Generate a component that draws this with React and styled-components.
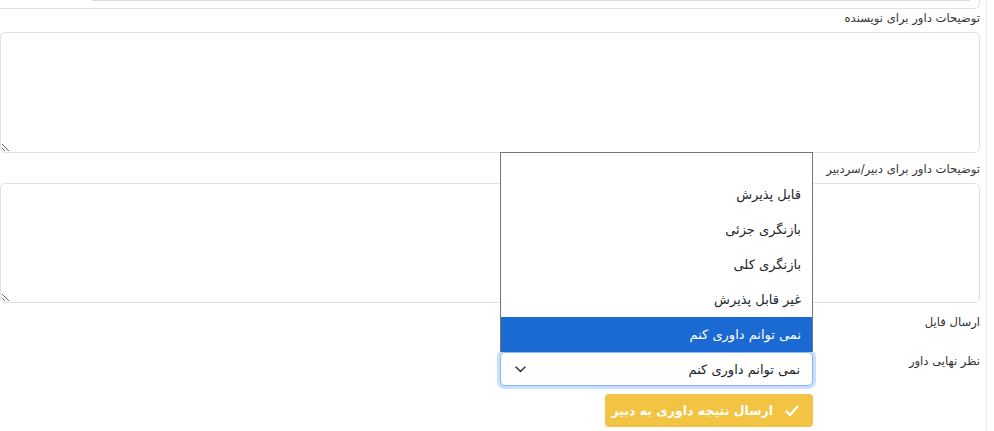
import React from "react"
import styled, { createGlobalStyle } from "styled-components"

const GlobalStyle = createGlobalStyle`
  html, body {
    margin: 0;
    padding: 0;
    background: #fff;
    overflow: hidden;
  }
  body {
    direction: rtl;
    font-family: "DejaVu Sans", "Noto Sans", sans-serif;
    color: #212529;
  }
`

const Frame = styled.div`
  height: 431px;
  margin-right: 7px;
  padding-right: 6px;
  border-right: 1px solid #e9ecef;
`

const TopBox = styled.div`
  height: 9px;
  border: 1px solid #dee2e6;
  border-top: none;
  border-left: none;
  border-radius: 0 0 5px 0;
  box-sizing: border-box;
`

const TopBar = styled.div`
  height: 1px;
  margin: 0 9px 0 92px;
  background: #d6dce4;
`

const Label = styled.label`
  display: block;
  font-size: 11.6px;
  line-height: 18px;
  color: #333;
  margin-top: ${p => p.$top || 0}px;
`

const TextArea = styled.textarea`
  display: block;
  width: 100%;
  height: ${p => p.$h}px;
  box-sizing: border-box;
  margin-top: 5px;
  border: 1px solid #dee2e6;
  border-radius: 5px;
  background: #fff;
  resize: vertical;
  font: inherit;
  outline: none;
`

const FormRow = styled.div`
  display: grid;
  grid-template-columns: 167px 313px;
  justify-content: start;
  height: ${p => p.$h}px;
`

const RowLabel = styled.div`
  font-size: 11.6px;
  line-height: 18px;
  color: #333;
  padding-top: ${p => p.$pad || 0}px;
`

const Control = styled.div`
  position: relative;
`

const Select = styled.div`
  height: 34px;
  box-sizing: border-box;
  border: 1px solid #86b7fe;
  border-radius: 5px;
  box-shadow: 0 0 0 3px rgba(13, 110, 253, 0.22);
  display: flex;
  align-items: center;
  justify-content: space-between;
  padding: 0 12px 0 14px;
  font-size: 13px;
  color: #212529;
  background: #fff;
`

const Chevron = styled.svg`
  width: 11px;
  height: 7px;
  display: block;
`

const OptionList = styled.div`
  position: absolute;
  left: 0;
  right: 0;
  bottom: 100%;
  box-sizing: border-box;
  height: 200px;
  border: 1px solid #767676;
  border-bottom: none;
  background: #fff;
  display: flex;
  flex-direction: column;
  z-index: 5;
`

const Option = styled.div`
  height: ${p => (p.$blank ? 24 : 35)}px;
  display: flex;
  align-items: center;
  padding-right: 11px;
  font-size: 13px;
  color: ${p => (p.$active ? "#fff" : "#212529")};
  background: ${p => (p.$active ? "#1b69d3" : "transparent")};
`

const SubmitButton = styled.button`
  margin-top: 8px;
  width: 208px;
  height: 33px;
  border: none;
  border-radius: 4px;
  background: #f3c443;
  color: #fff;
  font-family: inherit;
  font-size: 12.5px;
  font-weight: bold;
  display: flex;
  align-items: center;
  gap: 12px;
  padding: 0 14px 0 0;
  direction: rtl;
`

const Check = styled.svg`
  width: 14px;
  height: 12px;
  display: block;
`

const options = [
  "قابل پذیرش",
  "بازنگری جزئی",
  "بازنگری کلی",
  "غیر قابل پذیرش",
  "نمی توانم داوری کنم",
]

export default function App() {
  return (
    <>
      <GlobalStyle />
      <Frame>
        <TopBox>
          <TopBar />
        </TopBox>
        <Label>توضیحات داور برای نویسنده</Label>
        <TextArea $h={121} />
        <Label $top={7}>توضیحات داور برای دبیر/سردبیر</Label>
        <TextArea $h={120} />

        <FormRow $h={49}>
          <RowLabel $pad={10}>ارسال فایل</RowLabel>
          <div />
        </FormRow>

        <FormRow $h={34}>
          <RowLabel>نظر نهایی داور</RowLabel>
          <Control>
            <OptionList>
              <Option $blank />
              {options.map((o, i) => (
                <Option key={o} $active={i === options.length - 1}>
                  {o}
                </Option>
              ))}
            </OptionList>
            <Select>
              <span>نمی توانم داوری کنم</span>
              <Chevron viewBox="0 0 11 7">
                <polyline
                  points="1,1 5.5,5.5 10,1"
                  fill="none"
                  stroke="#343a40"
                  strokeWidth="1.5"
                  strokeLinecap="round"
                  strokeLinejoin="round"
                />
              </Chevron>
            </Select>
            <SubmitButton>
              <Check viewBox="0 0 14 12">
                <polyline
                  points="1.5,6.5 5,10 12.5,1.5"
                  fill="none"
                  stroke="#fff"
                  strokeWidth="2.2"
                  strokeLinecap="round"
                  strokeLinejoin="round"
                />
              </Check>
              <span>ارسال نتیجه داوری به دبیر</span>
            </SubmitButton>
          </Control>
        </FormRow>
      </Frame>
    </>
  )
}
